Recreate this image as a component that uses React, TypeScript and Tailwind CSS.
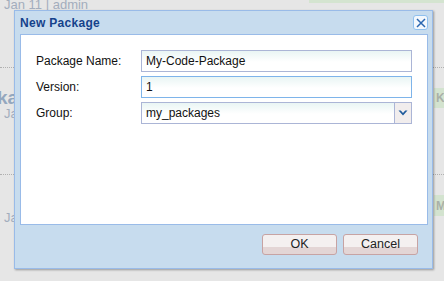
import React from "react";

function Field({ value, focused }: { value: string; focused?: boolean }) {
  return (
    <div
      className={`h-[22px] flex-1 border ${focused ? "border-[#7eb4ea]" : "border-[#abb5d6]"} bg-[linear-gradient(to_bottom,#e9f5f4_0px,#ffffff_11px)] flex items-center pl-[4px] text-[12px] text-[#111]`}
    >
      {value}
    </div>
  );
}

function Btn({ label }: { label: string }) {
  return (
    <div className="w-[75px] h-[21px] rounded-[3px] border border-[#c7a3a3] bg-[linear-gradient(to_bottom,#f4f0f0_0px,#f4f0f0_12px,#e3d5d5_12px,#e3d5d5_100%)] flex items-center justify-center text-[12.5px] text-[#222]">
      {label}
    </div>
  );
}

export default function App() {
  return (
    <div
      className="relative w-[444px] h-[281px] overflow-hidden bg-[#e6e6e6]"
      style={{ fontFamily: '"Liberation Sans", Arial, sans-serif' }}
    >
      {/* background page */}
      <div className="flex flex-col w-full">
        <div className="flex h-[10px] items-start">
          <span className="pl-[4px] -mt-[3px] text-[13px] leading-[16px] text-[#a3adbd]">Jan 11 | admin</span>
          <div className="ml-auto w-[135px] h-[3px] bg-[#d4e4d0]" />
        </div>
        <div className="mt-[57px] border-t border-dotted border-[#b0b0b0] h-0" />
        <div className="mt-[20px] flex h-[20px] items-center">
          <span className="-ml-[3px] text-[19px] font-bold text-[#93a7be] leading-[20px]">ka</span>
          <div className="ml-auto w-[10px] h-[20px] bg-[#d3e3cf] flex items-center pl-[2px] text-[12px] font-bold text-[#a9b0a8] overflow-hidden">K</div>
        </div>
        <div className="flex h-[12px] items-center">
          <span className="pl-[4px] text-[13px] leading-[12px] text-[#a3adbd]">Ja</span>
        </div>
        <div className="mt-[54px] border-t border-dotted border-[#b0b0b0] h-0" />
        <div className="mt-[20px] flex h-[21px]">
          <div className="ml-auto w-[10px] h-[21px] bg-[#d3e3cf] flex items-center pl-[2px] text-[12px] font-bold text-[#a9b0a8] overflow-hidden">M</div>
        </div>
        <div className="-mt-[5px] flex h-[14px] items-center">
          <span className="pl-[4px] text-[13px] leading-[14px] text-[#a3adbd]">Ja</span>
        </div>
      </div>

      {/* dialog */}
      <div className="absolute left-[14px] top-[10px] w-[419px] h-[259px] border border-[#99bbe8] bg-[#c7dcee] shadow-[1px_1px_2px_rgba(0,0,0,0.35)] flex flex-col">
        <div className="h-[23px] flex items-center justify-between pl-[5px] pr-[4px]">
          <span className="text-[12px] font-bold text-[#15428b] tracking-[0.3px]">New Package</span>
          <div className="w-[15px] h-[15px] rounded-[3px] border border-[#8fc0ee] bg-[#f3f8fd] flex items-center justify-center">
            <svg width="10" height="10" viewBox="0 0 10 10">
              <path d="M1 1 L9 9 M9 1 L1 9" stroke="#2a66b0" strokeWidth="1.5" />
            </svg>
          </div>
        </div>
        <div className="ml-[5px] mr-[4px] h-[191px] border border-[#99bbe8] bg-white pt-[15px] px-[15px] flex flex-col gap-[4px]">
          <div className="flex items-center">
            <span className="w-[105px] text-[12px] text-[#111]">Package Name:</span>
            <Field value="My-Code-Package" />
          </div>
          <div className="flex items-center">
            <span className="w-[105px] text-[12px] text-[#111]">Version:</span>
            <Field value="1" focused />
          </div>
          <div className="flex items-center">
            <span className="w-[105px] text-[12px] text-[#111]">Group:</span>
            <div className="h-[22px] flex-1 border border-[#abb5d6] flex">
              <div className="flex-1 bg-[linear-gradient(to_bottom,#e9f5f4_0px,#ffffff_11px)] flex items-center pl-[4px] text-[12px] text-[#111]">
                my_packages
              </div>
              <div className="w-[17px] border-l border-[#abb5d6] bg-[#f1eded] flex items-center justify-center">
                <svg width="10" height="6" viewBox="0 0 10 6">
                  <path d="M0.5 0.5 L5 5.5 L9.5 0.5 L7.2 0.5 L5 3 L2.8 0.5 Z" fill="#1f5b9c" />
                </svg>
              </div>
            </div>
          </div>
        </div>
        <div className="flex justify-end gap-[6px] pt-[9px] pr-[14px]">
          <Btn label="OK" />
          <Btn label="Cancel" />
        </div>
      </div>
    </div>
  );
}
